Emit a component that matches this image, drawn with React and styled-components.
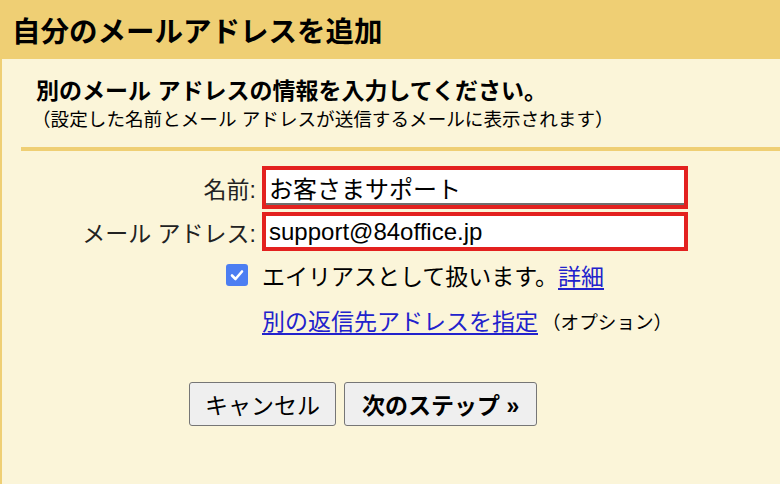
import React from "react";
import styled, { createGlobalStyle } from "styled-components";

const Global = createGlobalStyle`
  html, body { margin: 0; padding: 0; }
  body {
    background: #fbf5d9;
    font-family: "Liberation Sans", "Noto Sans CJK JP", sans-serif;
    color: #000;
  }
`;

const YELLOW = "#efcf74";

const Page = styled.div`
  width: 780px;
  height: 484px;
  box-sizing: border-box;
  border-left: 2px solid ${YELLOW};
  overflow: hidden;
`;

const Header = styled.div`
  height: 59px;
  margin-left: -2px;
  background: ${YELLOW};
  display: flex;
  align-items: center;
  padding: 6px 0 0 12px;
  box-sizing: border-box;
`;

const Title = styled.h1`
  margin: 0;
  font-size: 28.5px;
  font-weight: bold;
  line-height: 1;
`;

const Intro = styled.div`
  padding: 18px 0 0 34px;
`;

const Lead = styled.div`
  font-size: 23px;
  font-weight: bold;
  line-height: 29px;
`;

const Note = styled.div`
  font-size: 18.6px;
  line-height: 28px;
  margin-left: -4px;
`;

const Rule = styled.div`
  height: 4px;
  margin: 13px 0 0 19px;
  background: ${YELLOW};
`;

const Form = styled.div`
  display: grid;
  grid-template-columns: 254px 426px;
  grid-template-rows: 43px 39px 42px 42px;
  column-gap: 6px;
  row-gap: 3px;
  margin-top: 15px;
  font-size: 23px;
`;

const Label = styled.div`
  display: flex;
  align-items: center;
  justify-content: flex-end;
  color: #222;
`;

const Field = styled.div`
  box-sizing: border-box;
  border: 4px solid #e3211f;
  background: #fff;
  display: flex;
  align-items: center;
  padding: 0 3px;
  font-size: 24px;
  box-shadow: ${(p) => (p.$framed ? "inset 0 -2px 0 #6e6e6e" : "none")};
`;

const Cell = styled.div`
  display: flex;
  align-items: center;
  justify-content: ${(p) => (p.$end ? "flex-end" : "flex-start")};
  padding-right: ${(p) => (p.$end ? "8px" : "0")};
  white-space: nowrap;
`;

const Box = styled.span`
  width: 22px;
  height: 22px;
  border-radius: 3px;
  background: #4c7ef2;
  display: inline-flex;
  align-items: center;
  justify-content: center;
`;

const Link = styled.a`
  color: #2222cc;
  text-decoration: underline;
  text-underline-offset: 3px;
  cursor: pointer;
`;

const Small = styled.span`
  font-size: 18.6px;
  margin-left: 4px;
`;

const Buttons = styled.div`
  display: flex;
  gap: 8px;
  margin: 41px 0 0 187px;
`;

const Button = styled.button`
  height: 44px;
  padding: 0 ${(p) => (p.$primary ? "17px" : "15px")};
  background: #efefef;
  border: 1px solid #767676;
  border-radius: 3px;
  font-family: inherit;
  font-size: 23px;
  font-weight: ${(p) => (p.$primary ? "bold" : "normal")};
  color: #000;
`;

export default function App() {
  return (
    <>
      <Global />
      <Page>
        <Header>
          <Title>自分のメールアドレスを追加</Title>
        </Header>
        <Intro>
          <Lead>別のメール アドレスの情報を入力してください。</Lead>
          <Note>（設定した名前とメール アドレスが送信するメールに表示されます）</Note>
        </Intro>
        <Rule />
        <Form>
          <Label>名前:</Label>
          <Field $framed>お客さまサポート</Field>
          <Label>メール アドレス:</Label>
          <Field>support@84office.jp</Field>
          <Cell $end>
            <Box>
              <svg width="16" height="16" viewBox="0 0 16 16">
                <path d="M3 8.5 L6.5 12 L13 4.5" fill="none" stroke="#fff" strokeWidth="2.6" strokeLinecap="round" strokeLinejoin="round" />
              </svg>
            </Box>
          </Cell>
          <Cell>
            エイリアスとして扱います。<Link>詳細</Link>
          </Cell>
          <Cell />
          <Cell>
            <Link>別の返信先アドレスを指定</Link>
            <Small>（オプション）</Small>
          </Cell>
        </Form>
        <Buttons>
          <Button>キャンセル</Button>
          <Button $primary>次のステップ »</Button>
        </Buttons>
      </Page>
    </>
  );
}
